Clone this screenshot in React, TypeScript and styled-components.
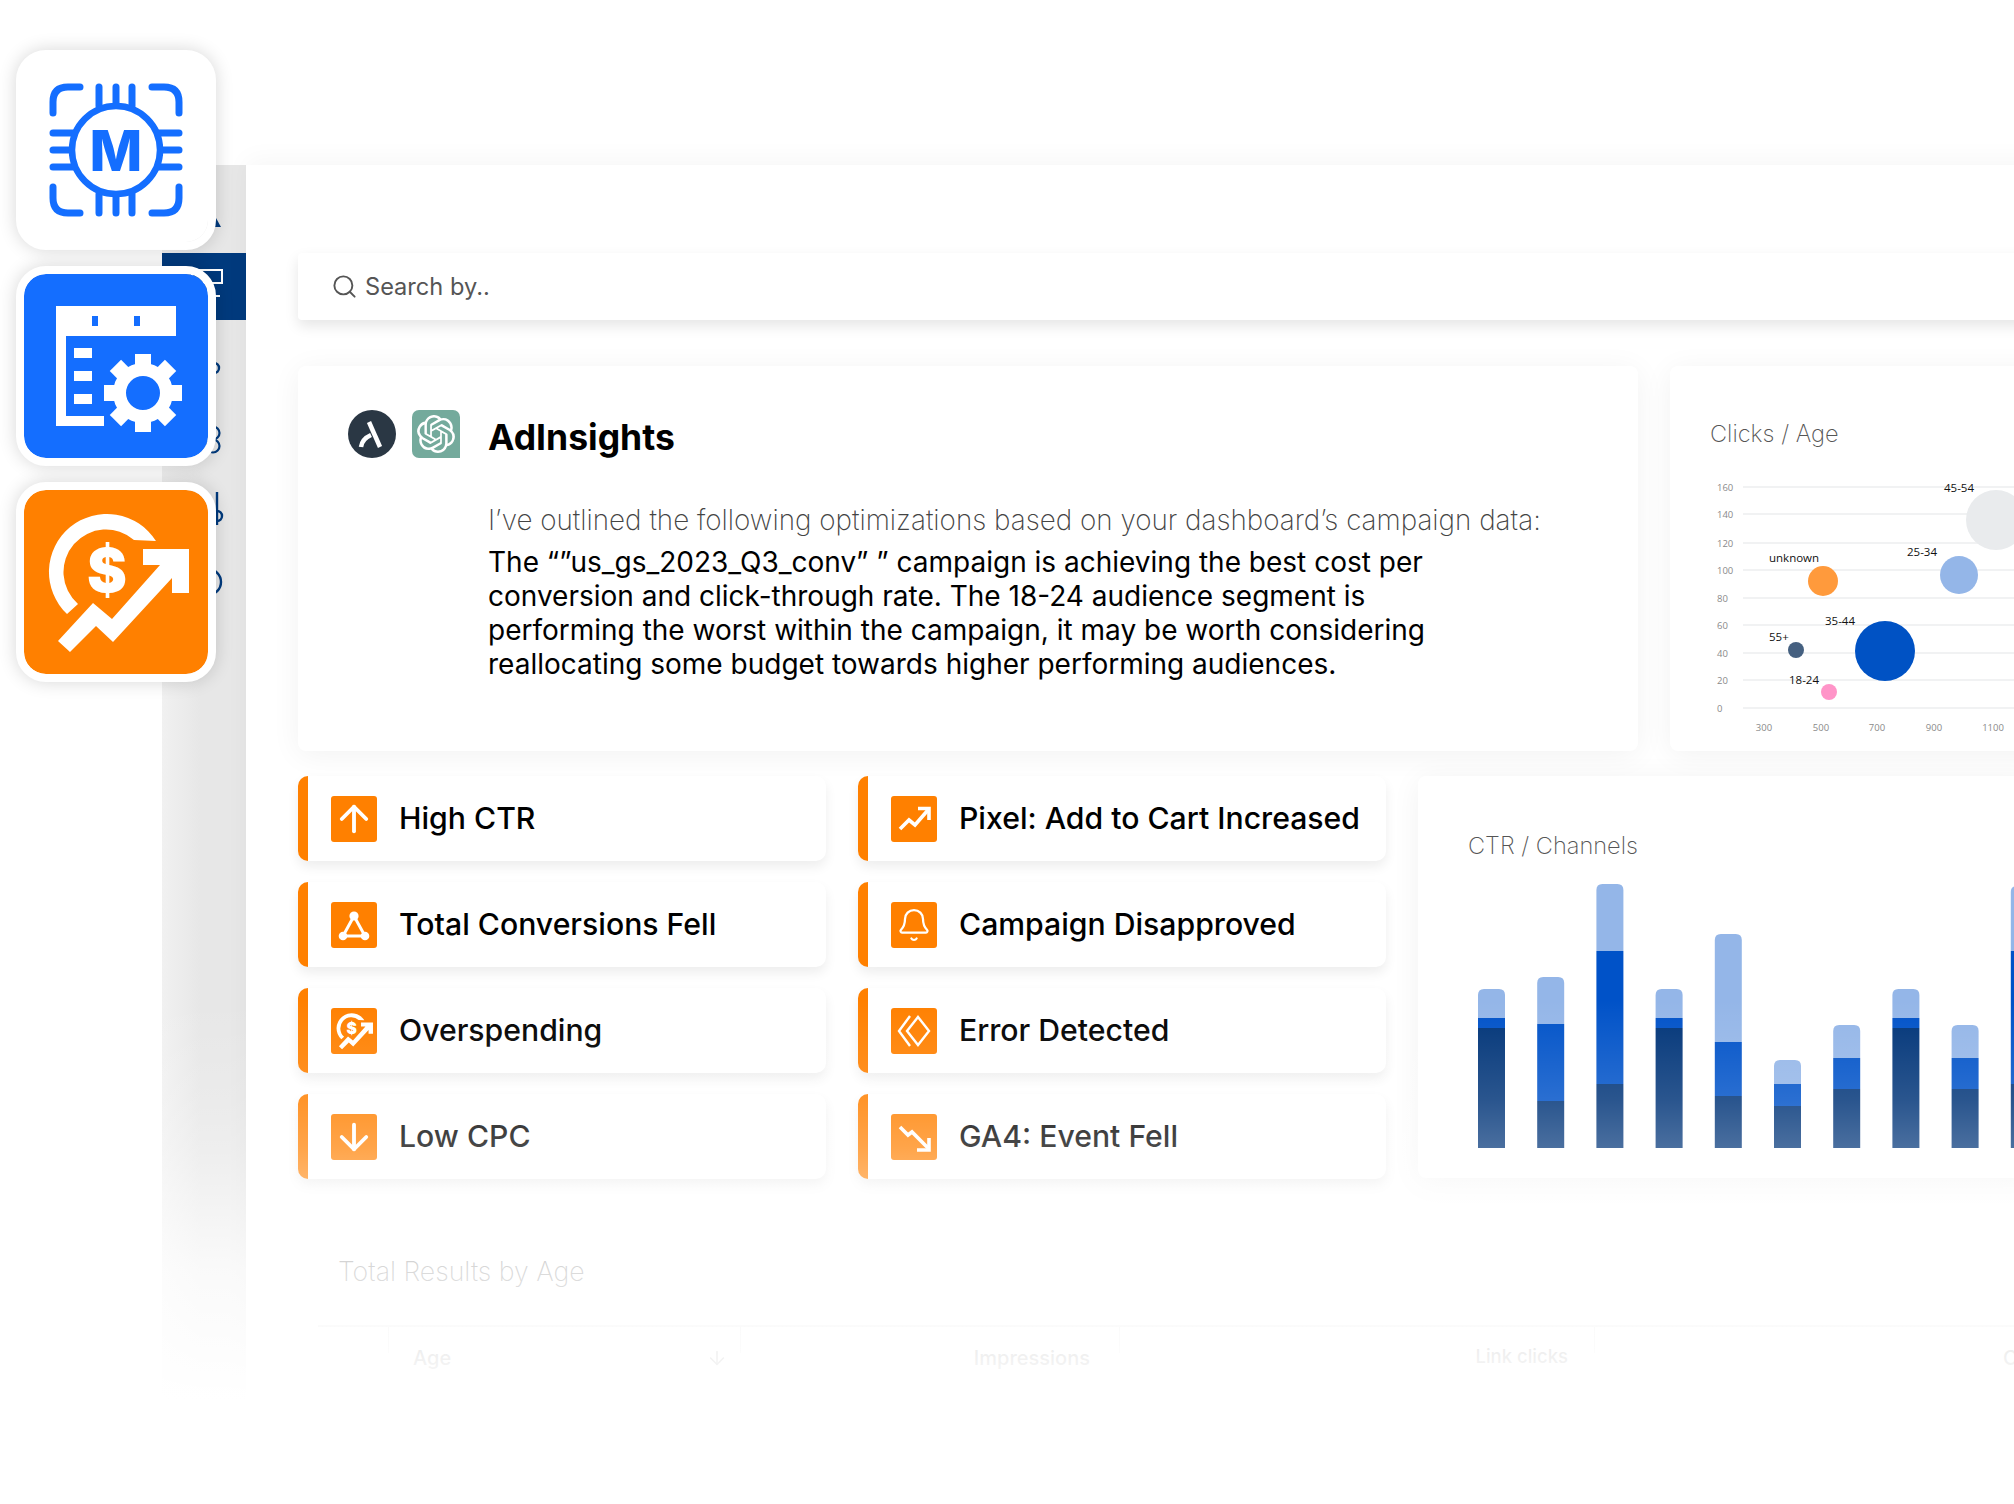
import React from "react";
import styled, { createGlobalStyle } from "styled-components";
import { ArrowUp, ArrowDown, Bell, Search, ArrowDown as SortArrow } from "lucide-react";
import { SiOpenai } from "react-icons/si";

const Global = createGlobalStyle`
  html, body { margin: 0; padding: 0; background: #fff; }
  body { font-family: Inter, "Liberation Sans", sans-serif; color: #000; }
  #root { width: 2014px; height: 1504px; overflow: hidden; }
`;

const Page = styled.div`
  position: relative;
  width: 2014px;
  height: 1504px;
  overflow: hidden;
  background: #fff;
  display: flex;
  padding: 165px 0 0 162px;
  box-sizing: border-box;
`;

/* ---------- sidebar ---------- */
const Sidebar = styled.nav`
  flex: 0 0 84px;
  height: 1240px;
  padding-top: 21px;
  box-sizing: border-box;
  background: linear-gradient(to right, #f1f1f1, #e7e7e7 45%);
  display: flex;
  flex-direction: column;
`;
const NavItem = styled.div<{ $h: number; $active?: boolean }>`
  height: ${(p) => p.$h}px;
  background: ${(p) => (p.$active ? "#003a7d" : "transparent")};
  svg { display: block; }
`;

/* ---------- main ---------- */
const Main = styled.main`
  flex: 0 0 1768px;
  background: #fff;
  padding: 88px 0 0 52px;
  box-sizing: border-box;
  box-shadow: 0 -6px 24px rgba(0, 0, 0, 0.035);
  display: flex;
  flex-direction: column;
`;
const SearchBar = styled.div`
  height: 67px;
  border-radius: 4px;
  background: #fff;
  box-shadow: 0 6px 14px rgba(0, 0, 0, 0.1);
  display: flex;
  align-items: center;
  gap: 7px;
  padding-left: 33px;
  font-size: 23.6px;
  color: #555;
`;
const TopRow = styled.div`
  display: flex;
  gap: 32px;
  margin-top: 46px;
  height: 385px;
`;
const Card = styled.section`
  border-radius: 8px;
  background: #fff;
  box-shadow: 0 4px 30px rgba(0, 0, 0, 0.055);
  box-sizing: border-box;
  flex: none;
`;
const InsightCard = styled(Card)`
  width: 1340px;
  padding: 44px 0 0 50px;
`;
const InsightHead = styled.div`
  display: flex;
  align-items: center;
`;
const LogoRound = styled.div`
  width: 48px;
  height: 48px;
  border-radius: 50%;
  background: #2a3744;
  svg { display: block; }
`;
const LogoSquare = styled.div`
  width: 48px;
  height: 48px;
  margin-left: 16px;
  border-radius: 7px 7px 0 7px;
  background: #74aa9c;
  color: #fff;
  display: flex;
  align-items: center;
  justify-content: center;
`;
const InsightTitle = styled.h1`
  margin: 8px 0 0 28px;
  font-size: 35.5px;
  line-height: 40px;
  font-weight: 700;
`;
const InsightBody = styled.div`
  margin: 45px 0 0 140px;
  width: 1000px;
`;
const Lead = styled.p`
  margin: 0 0 8px;
  font-size: 27.8px;
  line-height: 34px;
  font-weight: 200;
  color: #444;
  white-space: nowrap;
`;
const Para = styled.p`
  margin: 0;
  font-size: 28px;
  line-height: 34px;
  font-weight: 400;
  color: #000;
`;
const ChartTitle = styled.h2`
  margin: 0;
  font-size: 23.6px;
  line-height: 30px;
  font-weight: 200;
  color: #555;
  white-space: nowrap;
`;
const ClicksCard = styled(Card)`
  width: 520px;
  padding: 53px 0 0 40px;
  svg { display: block; margin-top: 6px; overflow: visible; }
`;
const LowerRow = styled.div`
  display: flex;
  gap: 32px;
  margin-top: 25px;
`;
const AlertGrid = styled.div`
  flex: none;
  display: grid;
  grid-template-columns: 528px 528px;
  grid-auto-rows: 85px;
  column-gap: 32px;
  row-gap: 21px;
`;
const Alert = styled.div`
  border-left: 10px solid #ff8000;
  border-radius: 10px;
  background: #fff;
  box-shadow: 0 6px 12px rgba(0, 0, 0, 0.07);
  display: flex;
  align-items: center;
  gap: 22px;
  padding-left: 23px;
`;
const AlertIcon = styled.div`
  width: 46px;
  height: 46px;
  border-radius: 3px;
  background: #ff8000;
  color: #fff;
  flex: none;
  display: flex;
  align-items: center;
  justify-content: center;
  margin-top: 1px;
  svg { flex: none; }
`;
const AlertLabel = styled.span`
  font-size: 30.2px;
  line-height: 36px;
  font-weight: 450;
  white-space: nowrap;
  margin-bottom: 2px;
`;
const ChannelsCard = styled(Card)`
  width: 620px;
  height: 402px;
  padding: 55px 0 0 50px;
  svg { display: block; margin-top: 19px; overflow: visible; }
`;
const Results = styled.section`
  padding: 74px 0 0 40px;
`;
const ResultsTitle = styled.h2`
  margin: 0;
  font-size: 26.7px;
  line-height: 36px;
  font-weight: 200;
  color: #555;
  white-space: nowrap;
`;
const TableHead = styled.div`
  margin: 36px 0 0 -20px;
  height: 62px;
  border-top: 2px solid #ddd;
  display: grid;
  grid-template-columns: 71px 352px 379px 475px 500px;
  align-items: stretch;
  font-size: 20px;
  font-weight: 500;
  color: #333;
  white-space: nowrap;
  width: 1777px;
`;
const TableCell = styled.div<{ $align?: string; $pad?: string; $size?: number }>`
  display: flex;
  justify-content: ${(p) => p.$align || "flex-end"};
  align-items: center;
  padding: ${(p) => p.$pad || "0 30px 0 0"};
  font-size: ${(p) => p.$size || 20}px;
  background: linear-gradient(#d8d8d8, #d8d8d8) no-repeat right top / 1px 26px;
`;

/* ---------- over the page ---------- */
const Tiles = styled.div`
  position: absolute;
  left: 16px;
  top: 50px;
  display: flex;
  flex-direction: column;
  gap: 16px;
`;
const Tile = styled.div<{ $bg: string }>`
  width: 200px;
  height: 200px;
  box-sizing: border-box;
  border-radius: 30px;
  border: 8px solid #fff;
  background: ${(p) => p.$bg};
  box-shadow: 0 0 18px rgba(0, 0, 0, 0.16);
  background-clip: padding-box;
  overflow: hidden;
  svg { display: block; margin: -8px; }
`;
const Fade = styled.div`
  position: absolute;
  left: 0;
  right: 0;
  top: 1000px;
  bottom: 0;
  pointer-events: none;
  background: linear-gradient(
    to bottom,
    rgba(255, 255, 255, 0) 0,
    rgba(255, 255, 255, 0.165) 100px,
    rgba(255, 255, 255, 0.29) 148px,
    rgba(255, 255, 255, 0.78) 270px,
    rgba(255, 255, 255, 0.93) 357px,
    #fff 400px
  );
`;

/* ---------- drawings ---------- */
const BLUE = "#146eff";
const GROWTH = "M42 159L77 121L96 137L144 83H127V67H173V111H156V96L97 160L80 144L54 170Z";
const ARC = "M51 132A58 58 0 1 1 140 59L118 58A42 42 0 1 0 62 122Z";

const ChipMark = () => (
  <svg width="200" height="200" viewBox="0 0 200 200">
    <g fill="none" stroke={BLUE} strokeWidth="7" strokeLinecap="round">
      <path d="M64 37H52Q37 37 37 52V63" />
      <path d="M136 37H148Q163 37 163 52V63" />
      <path d="M64 163H52Q37 163 37 148V137" />
      <path d="M136 163H148Q163 163 163 148V137" />
      <path d="M83 37V56M100 37V56M116 37V56M83 163V144M100 163V144M116 163V144" />
      <path d="M37 83H58M37 100H56M37 117H58M163 83H142M163 100H144M163 117H142" />
      <circle cx="100" cy="100" r="44" strokeWidth="6.5" fill="#fff" />
    </g>
    <text x="100" y="120.5" textAnchor="middle" fontFamily="Inter, sans-serif" fontWeight="800" fontSize="56" fill={BLUE}>M</text>
  </svg>
);

const Gear = () => {
  const teeth = [0, 45, 90, 135, 180, 225, 270, 315];
  return (
    <g transform="translate(127 127)" fill="#fff">
      {teeth.map((a) => (
        <rect key={a} x="-8" y="-39" width="16" height="14" transform={`rotate(${a})`} />
      ))}
      <path fillRule="evenodd" d="M-30 0A30 30 0 1 1 30 0A30 30 0 1 1 -30 0ZM-17 0A17 17 0 1 0 17 0A17 17 0 1 0 -17 0Z" />
    </g>
  );
};
const ScheduleMark = () => (
  <svg width="200" height="200" viewBox="0 0 200 200">
    <path fill="#fff" d="M40 40H160V70H50V150H88V160H40Z" />
    <path fill={BLUE} d="M76 50H82V60H76ZM118 50H124V60H118Z" />
    <path fill="#fff" d="M58 82H76V92H58ZM58 105H76V115H58ZM58 128H76V138H58Z" />
    <Gear />
  </svg>
);
const GrowthMark = ({ size = 200 }: { size?: number }) => (
  <svg width={size} height={size} viewBox="0 0 200 200" style={size === 200 ? undefined : { margin: 0 }}>
    <path fill="#fff" d={ARC} />
    <text x="91" y="110" textAnchor="middle" fontFamily="Inter, sans-serif" fontWeight="900" fontSize="60" fill="#fff">$</text>
    <path fill="#fff" d={GROWTH} />
  </svg>
);

const CLICKS_OX = 1710;
const CLICKS_OY = 455;
const Bubble = ({ cx, cy, r, fill }: { cx: number; cy: number; r: number; fill: string }) => (
  <circle cx={cx - CLICKS_OX} cy={cy - CLICKS_OY} r={r} fill={fill} />
);
const ClicksChart = () => {
  const ox = CLICKS_OX;
  const oy = CLICKS_OY;
  const grid = [
    [160, 487],
    [140, 514],
    [120, 543],
    [100, 570],
    [80, 598],
    [60, 625],
    [40, 653],
    [20, 680],
    [0, 708],
  ];
  const xs = [
    [300, 1764],
    [500, 1821],
    [700, 1877],
    [900, 1934],
    [1100, 1993],
  ];
  const labels: [string, number, number][] = [
    ["45-54", 1944, 488],
    ["25-34", 1907, 552],
    ["unknown", 1769, 558],
    ["35-44", 1825, 621],
    ["55+", 1769, 637],
    ["18-24", 1789, 680],
  ];
  return (
    <svg width="304" height="280" viewBox="0 0 304 280">
      {grid.map(([v, y]) => (
        <g key={v}>
          <line x1={1743 - ox} x2={2014 - ox} y1={y - oy} y2={y - oy} stroke="#e4e6e8" strokeWidth="1.2" />
          <text x={1717 - ox} y={y - oy + 3.5} fontFamily="'Open Sans', sans-serif" fontSize="9.5" fill="#8a8a8a">{v}</text>
        </g>
      ))}
      {xs.map(([v, x]) => (
        <text key={v} x={x - ox} y={727 - oy + 3.5} textAnchor="middle" fontFamily="'Open Sans', sans-serif" fontSize="9.5" fill="#8a8a8a">{v}</text>
      ))}
      <Bubble cx={1996} cy={520} r={30} fill="#e9ebed" />
      <Bubble cx={1959} cy={575} r={19} fill="#94b6e8" />
      <Bubble cx={1823} cy={581} r={15} fill="#ff9a3c" />
      <Bubble cx={1885} cy={651} r={30} fill="#0052c4" />
      <Bubble cx={1796} cy={650} r={8} fill="#456080" />
      <Bubble cx={1829} cy={692} r={8} fill="#ff94c8" />
      {labels.map(([t, x, y]) => (
        <text key={t} x={x - ox} y={y - oy + 4} fontFamily="'Open Sans', sans-serif" fontSize="11.5" fill="#111">{t}</text>
      ))}
    </svg>
  );
};

const bars = [
  [989, 1018, 1028],
  [977, 1024, 1101],
  [884, 951, 1084],
  [989, 1018, 1028],
  [934, 1042, 1096],
  [1060, 1084, 1106],
  [1025, 1058, 1089],
  [989, 1018, 1028],
  [1025, 1058, 1089],
  [886, 951, 1084],
];
const ChannelsChart = () => {
  const oy = 880;
  const base = 1148 - oy;
  return (
    <svg width="560" height="270" viewBox="0 0 560 270">
      {bars.map(([a, b, c], i) => {
        const x = 10 + i * 59.2;
        const t = a - oy;
        return (
          <g key={i}>
            <path fill="#94b6e8" d={`M${x} ${b - oy}V${t + 6}q0-6 6-6h15q6 0 6 6V${b - oy}Z`} />
            <rect x={x} y={b - oy} width="27" height={c - b} fill="#0052c8" />
            <rect x={x} y={c - oy} width="27" height={base - (c - oy)} fill="#003478" />
          </g>
        );
      })}
    </svg>
  );
};

const NetworkIcon = () => (
  <svg width="34" height="34" viewBox="0 0 34 34" fill="none" stroke="#fff" strokeWidth="3">
    <path d="M17 8L6 28H28Z" />
    <circle cx="17" cy="8" r="4.6" fill="#fff" stroke="none" />
    <circle cx="6" cy="28" r="4.3" fill="#fff" stroke="none" />
    <circle cx="28" cy="28" r="4.3" fill="#fff" stroke="none" />
  </svg>
);
const TrendUp = () => (
  <svg width="34" height="34" viewBox="0 0 34 34" fill="none" stroke="#fff" strokeWidth="3.6">
    <path d="M3 27l9-9 6 5 13-15" />
    <path d="M21 6.5H32V18" />
  </svg>
);
const TrendDown = () => (
  <svg width="34" height="34" viewBox="0 0 34 34" fill="none" stroke="#fff" strokeWidth="3.6">
    <path d="M3 7l8 8 4-3 17 17" />
    <path d="M32 18V30H20" />
  </svg>
);
const DiamondIcon = () => (
  <svg width="36" height="36" viewBox="0 0 36 36" fill="none" stroke="#fff" strokeWidth="2.4">
    <path d="M22 4L33 18L22 32L11 18Z" />
    <path d="M14 3L3 18L14 33" />
  </svg>
);

const alerts: { label: string; icon: React.ReactNode }[] = [
  { label: "High CTR", icon: <ArrowUp size={42} strokeWidth={2.2} /> },
  { label: "Pixel: Add to Cart Increased", icon: <TrendUp /> },
  { label: "Total Conversions Fell", icon: <NetworkIcon /> },
  { label: "Campaign Disapproved", icon: <Bell size={36} strokeWidth={1.5} /> },
  { label: "Overspending", icon: <GrowthMark size={52} /> },
  { label: "Error Detected", icon: <DiamondIcon /> },
  { label: "Low CPC", icon: <ArrowDown size={42} strokeWidth={2.2} /> },
  { label: "GA4: Event Fell", icon: <TrendDown /> },
];

export default function App() {
  return (
    <Page>
      <Global />
      <Sidebar>
        <NavItem $h={67}>
          <svg width="84" height="67" viewBox="0 0 84 67"><path fill="#003a7d" d="M54 32L59 41H49Z" /></svg>
        </NavItem>
        <NavItem $h={67} $active>
          <svg width="84" height="67" viewBox="0 0 84 67" fill="none" stroke="#fff" strokeWidth="2">
            <rect x="30" y="17" width="30" height="13" />
            <path d="M40 43H58M46 30V43" />
          </svg>
        </NavItem>
        <NavItem $h={73}>
          <svg width="84" height="73" viewBox="0 0 84 73" fill="none" stroke="#003a7d" strokeWidth="2.4"><circle cx="52" cy="48" r="5" /></svg>
        </NavItem>
        <NavItem $h={73}>
          <svg width="84" height="73" viewBox="0 0 84 73" fill="none" stroke="#003a7d" strokeWidth="2.2"><circle cx="51" cy="40" r="6.5" /><circle cx="51" cy="53" r="6.5" /></svg>
        </NavItem>
        <NavItem $h={73}>
          <svg width="84" height="73" viewBox="0 0 84 73" fill="none" stroke="#003a7d" strokeWidth="2.4"><path d="M55 26V59" /><circle cx="55" cy="50" r="5" /></svg>
        </NavItem>
        <NavItem $h={73}>
          <svg width="84" height="73" viewBox="0 0 84 73" fill="none" stroke="#003a7d" strokeWidth="2.4"><circle cx="46" cy="43" r="13" /></svg>
        </NavItem>
      </Sidebar>
      <Main>
        <SearchBar>
          <Search size={27} strokeWidth={1.7} color="#555" />
          <span>Search by..</span>
        </SearchBar>
        <TopRow>
          <InsightCard>
            <InsightHead>
              <LogoRound>
                <svg width="48" height="48" viewBox="0 0 48 48" fill="none" stroke="#fff" strokeWidth="4.5">
                  <path d="M21 12L32 37" />
                  <path d="M13 37Q14 29 23 25" />
                </svg>
              </LogoRound>
              <LogoSquare><SiOpenai size={38} /></LogoSquare>
              <InsightTitle>AdInsights</InsightTitle>
            </InsightHead>
            <InsightBody>
              <Lead>I’ve outlined the following optimizations based on your dashboard’s campaign data:</Lead>
              <Para>The “”us_gs_2023_Q3_conv” ” campaign is achieving the best cost per conversion and click-through rate. The 18-24 audience segment is performing the worst within the campaign, it may be worth considering reallocating some budget towards higher performing audiences.</Para>
            </InsightBody>
          </InsightCard>
          <ClicksCard>
            <ChartTitle>Clicks / Age</ChartTitle>
            <ClicksChart />
          </ClicksCard>
        </TopRow>
        <LowerRow>
          <AlertGrid>
            {alerts.map((a) => (
              <Alert key={a.label}>
                <AlertIcon>{a.icon}</AlertIcon>
                <AlertLabel>{a.label}</AlertLabel>
              </Alert>
            ))}
          </AlertGrid>
          <ChannelsCard>
            <ChartTitle>CTR / Channels</ChartTitle>
            <ChannelsChart />
          </ChannelsCard>
        </LowerRow>
        <Results>
          <ResultsTitle>Total Results by Age</ResultsTitle>
          <TableHead>
            <TableCell />
            <TableCell $align="space-between" $pad="0 13px 0 24px">Age<SortArrow size={22} strokeWidth={1.5} /></TableCell>
            <TableCell>Impressions</TableCell>
            <TableCell $pad="0 27px 4px 0" $size={18.5}>Link clicks</TableCell>
            <TableCell $align="flex-start" $pad="0 0 0 408px">Clicks</TableCell>
          </TableHead>
        </Results>
      </Main>
      <Tiles>
        <Tile $bg="#fff"><ChipMark /></Tile>
        <Tile $bg={BLUE}><ScheduleMark /></Tile>
        <Tile $bg="#ff8000"><GrowthMark /></Tile>
      </Tiles>
      <Fade />
    </Page>
  );
}
